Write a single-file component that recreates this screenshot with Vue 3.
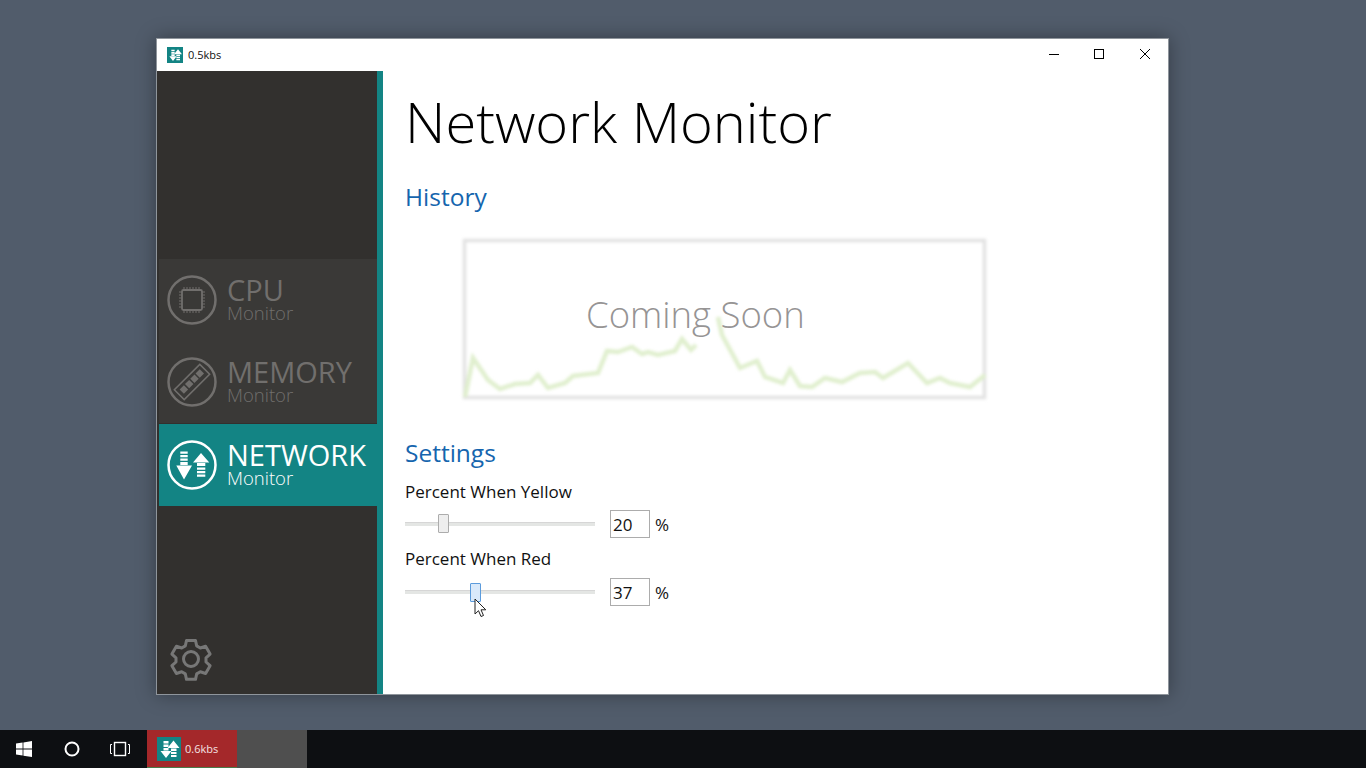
<script setup>
const navItems = [
  { id: 'cpu', title: 'CPU', active: false },
  { id: 'memory', title: 'MEMORY', active: false },
  { id: 'network', title: 'NETWORK', active: true }
]
const sliders = [
  { label: 'Percent When Yellow', value: 20, thumb: 33, hot: false },
  { label: 'Percent When Red', value: 37, thumb: 65, hot: true }
]
const line1 = '465,397 473,358 488,380 500,389 515,384 530,383 538,375 548,388 565,383 573,376 598,373 607,351 618,352 632,347 642,354 648,352 658,355 675,351 682,339 691,350 696,345'
const line2 = '718,317 722,335 740,368 757,361 765,377 783,383 790,370 800,386 812,387 825,378 842,382 860,373 875,372 883,378 908,363 927,383 940,378 950,383 970,387 985,375'
</script>

<template>
  <div class="desktop">
    <div class="workspace">
      <div class="window">
        <header class="titlebar">
          <span class="app-icon">
            <svg viewBox="0 0 24 24" width="16" height="16">
              <path d="M6.500 4h5v2.500h-5zM6.500 7.500h5V10h-5zM6.500 11h5v2.500h-5zM3.500 14h11L9 21z" fill="#fff" />
              <path d="M16.500 3.500l6 7.500h-12zM14 11.500h5.500V14H14zM14 15h5.500v2H14zM14 18h5.500v2H14z" fill="#fff" />
            </svg>
          </span>
          <span class="app-title">0.5kbs</span>
          <div class="controls">
            <svg width="46" height="32" viewBox="0 0 46 32"><path d="M19 15.500h10" stroke="#000" fill="none" /></svg>
            <svg width="46" height="32" viewBox="0 0 46 32"><rect x="18.500" y="10.500" width="9" height="9" stroke="#000" fill="none" /></svg>
            <svg width="46" height="32" viewBox="0 0 46 32"><path d="M18 10l10 10M28 10l-10 10" stroke="#000" fill="none" /></svg>
          </div>
        </header>
        <div class="body">
          <aside class="sidebar">
            <nav class="nav">
              <div v-for="item in navItems" :key="item.id" class="nav-item" :class="{ active: item.active }">
                <svg class="nav-icon" viewBox="0 0 50 50" width="50" height="50">
                  <circle cx="25" cy="25" r="23.500" fill="none" stroke="currentColor" stroke-width="2.500" />
                  <g v-if="item.id === 'cpu'" fill="none" stroke="currentColor">
                    <rect x="15" y="15" width="20" height="20" rx="1.500" stroke-width="1.800" />
                    <path d="M17 12v3M20 12v3M23 12v3M26 12v3M29 12v3M32 12v3M17 35v3M20 35v3M23 35v3M26 35v3M29 35v3M32 35v3M12 17h3M12 20h3M12 23h3M12 26h3M12 29h3M12 32h3M35 17h3M35 20h3M35 23h3M35 26h3M35 29h3M35 32h3" stroke-width="1" />
                  </g>
                  <g v-else-if="item.id === 'memory'" transform="rotate(-45 25 25)">
                    <rect x="7" y="18" width="36" height="14" fill="none" stroke="currentColor" stroke-width="1.500" />
                    <rect x="11" y="21.500" width="6" height="6" fill="currentColor" />
                    <rect x="18.500" y="21.500" width="6" height="6" fill="currentColor" />
                    <rect x="26" y="21.500" width="6" height="6" fill="currentColor" />
                    <rect x="33.500" y="21.500" width="6" height="6" fill="currentColor" />
                  </g>
                  <g v-else fill="currentColor">
                    <path d="M13.300 11.500h7.400v2.200h-7.400zM13.300 15h7.400v2.200h-7.400zM13.300 18.500h7.400v2.200h-7.400zM13.300 22h7.400v3h-7.400zM9.300 25.500H25L17 39.500z" />
                    <path d="M34 13l8.300 9.500H26zM30 23h8.300v3h-8.300zM30 27.500h8.300v2.200h-8.300zM30 31h8.300v2.200h-8.300zM30 34.500h8.300v2.200h-8.300z" />
                  </g>
                </svg>
                <div class="nav-text">
                  <div class="nav-title">{{ item.title }}</div>
                  <div class="nav-sub">Monitor</div>
                </div>
              </div>
            </nav>
            <svg class="gear" viewBox="0 0 44 44" width="44" height="44">
              <path d="M17.500 3.500h9l1.200 5.400 3.600 2.100 5.300-1.700 4.500 7.800-4.100 3.700v4.200l4.100 3.700-4.500 7.800-5.300-1.700-3.600 2.100-1.200 5.400h-9l-1.200-5.400-3.600-2.100-5.300 1.700-4.500-7.800 4.100-3.700v-4.200l-4.100-3.700 4.500-7.800 5.300 1.700 3.600-2.100z" fill="none" stroke="#777" stroke-width="3" stroke-linejoin="round" />
              <circle cx="22" cy="22" r="7.500" fill="none" stroke="#777" stroke-width="3" />
            </svg>
          </aside>
          <main class="content">
            <h1 class="page-title">Network Monitor</h1>
            <h2 class="section">History</h2>
            <div class="chart">
              <svg class="chart-svg" viewBox="455 230 540 180" width="540" height="180">
                <rect x="464.500" y="240.500" width="520" height="157" fill="none" stroke="#e2e2e2" stroke-width="3.500" />
                <polyline :points="line1" fill="none" stroke="#e0efce" stroke-width="4.500" />
                <polyline :points="line2" fill="none" stroke="#e0efce" stroke-width="4.500" />
              </svg>
              <div class="soon">Coming Soon</div>
            </div>
            <h2 class="section settings">Settings</h2>
            <div v-for="s in sliders" :key="s.label" class="setting">
              <div class="setting-label">{{ s.label }}</div>
              <div class="setting-row">
                <div class="slider">
                  <div class="track"></div>
                  <div class="thumb" :class="{ hot: s.hot }" :style="{ left: s.thumb + 'px' }"></div>
                </div>
                <div class="value">{{ s.value }}</div>
                <span class="unit">%</span>
              </div>
            </div>
            <svg class="cursor" width="14" height="20" viewBox="0 0 14 20">
              <path d="M1 1v15l3.500-3.300 2.500 5.800 2.500-1-2.500-5.700h4.800z" fill="#fff" stroke="#222" stroke-width="1" />
            </svg>
          </main>
        </div>
      </div>
    </div>
    <footer class="taskbar">
      <div class="tb-btn">
        <svg width="16" height="16" viewBox="0 0 16 16" fill="#fff">
          <path d="M0 2.400l6.600-.9v6.100H0zM7.400 1.400L16 0v7.600H7.400zM0 8.400h6.600v6.100L0 13.600zM7.400 8.400H16V16l-8.600-1.300z" />
        </svg>
      </div>
      <div class="tb-btn">
        <svg width="16" height="16" viewBox="0 0 16 16"><circle cx="8" cy="8" r="6.500" fill="none" stroke="#fff" stroke-width="2" /></svg>
      </div>
      <div class="tb-btn">
        <svg width="22" height="16" viewBox="0 0 22 16" fill="none" stroke="#fff">
          <rect x="5.500" y="1.500" width="11" height="13" stroke-width="1.400" />
          <path d="M3 3.500H1.500v9H3M19 3.500h1.500v9H19" />
        </svg>
      </div>
      <div class="tb-app">
        <span class="tb-tile">
          <svg viewBox="0 0 24 24" width="24" height="24">
            <path d="M6.500 4h5v2.500h-5zM6.500 7.500h5V10h-5zM6.500 11h5v2.500h-5zM3.500 14h11L9 21z" fill="#fff" />
            <path d="M16.500 3.500l6 7.500h-12zM14 11.500h5.500V14H14zM14 15h5.500v2H14zM14 18h5.500v2H14z" fill="#fff" />
          </svg>
        </span>
        <span class="tb-label">0.6kbs</span>
      </div>
      <div class="tb-empty"></div>
    </footer>
  </div>
</template>

<style>
html, body { margin: 0; padding: 0; overflow: hidden; }
</style>

<style scoped>
.desktop {
  width: 1366px;
  height: 768px;
  display: flex;
  flex-direction: column;
  background: #515c6b;
  font-family: "Open Sans", "Noto Sans", sans-serif;
}
.workspace { position: relative; flex: 1; }
.window {
  position: absolute;
  left: 156px;
  top: 38px;
  width: 1013px;
  height: 657px;
  box-sizing: border-box;
  display: flex;
  flex-direction: column;
  background: #fff;
  border: 1px solid #8f959c;
  box-shadow: 0 0 18px rgba(0, 0, 0, .35);
}
.titlebar {
  height: 32px;
  display: flex;
  align-items: center;
  padding-left: 10px;
  flex: none;
}
.app-icon {
  width: 16px;
  height: 16px;
  background: #138484;
  display: flex;
}
.app-title { margin-left: 5px; font-size: 11px; line-height: 14px; margin-top: -1px; color: #111; }
.controls { margin-left: auto; display: flex; }
.controls svg { display: block; }
.body { flex: 1; display: flex; min-height: 0; }
.sidebar {
  flex: none;
  box-sizing: border-box;
  background: #32302e;
  border-right: 6px solid #138484;
  width: 226px;
  display: flex;
  flex-direction: column;
  padding-top: 188px;
}
.nav { margin-left: 2px; }
.nav-item {
  height: 82px;
  box-sizing: border-box;
  background: #3a3937;
  color: #716f6d;
  display: flex;
  align-items: center;
  padding-left: 8px;
  gap: 10px;
}
.nav-item.active { background: #138484; color: #fff; margin-top: 1px; }
.nav-icon { flex: none; }
.nav-text { display: flex; flex-direction: column; margin-top: -8px; }
.nav-title { font-size: 29px; line-height: 33px; font-weight: 400; }
.nav-sub { font-size: 18.500px; line-height: 14px; font-weight: 300; }
.gear { margin: auto 0 13px 12px; }
.content {
  position: relative;
  flex: 1;
  padding-left: 22px;
  color: #111;
}
.page-title {
  margin: 16px 0 0;
  font-size: 56px;
  line-height: 68px;
  font-weight: 300;
  color: #000;
}
.section {
  margin: 25px 0 0;
  font-size: 24.500px;
  line-height: 34px;
  font-weight: 400;
  color: #1565ae;
}
.section.settings { margin-top: 26px; }
.chart { position: relative; margin: 16px 0 0 50px; width: 540px; height: 180px; }
.chart-svg { display: block; filter: blur(1.6px); }
.soon {
  position: absolute;
  left: 131px;
  top: 58px;
  font-size: 36.500px;
  line-height: 52px;
  font-weight: 300;
  color: #969494;
}
.setting { margin-top: 9px; }
.section.settings + .setting { margin-top: 10px; }
.setting-label { font-size: 17px; line-height: 24px; color: #111; }
.setting-row { display: flex; align-items: center; margin-top: 6px; height: 28px; }
.setting:last-of-type .setting-row { margin-top: 7px; }
.slider { position: relative; width: 190px; height: 28px; }
.track {
  position: absolute;
  left: 0; right: 0; top: 12px;
  height: 4px;
  background: #e4e6e4;
  border-top: 1px solid #d6d6d6;
  box-sizing: border-box;
}
.thumb {
  position: absolute;
  top: 4px;
  width: 11px;
  height: 19px;
  box-sizing: border-box;
  background: #eeeeee;
  border: 1px solid #acacac;
  border-radius: 1px;
}
.thumb.hot { background: #d9e9fa; border-color: #5b9bdc; top: 5px; }
.value {
  margin-left: 15px;
  width: 40px;
  height: 28px;
  box-sizing: border-box;
  border: 1px solid #acacac;
  padding-left: 2px;
  font-size: 17px;
  line-height: 27px;
}
.unit { margin-left: 5px; font-size: 17px; }
.cursor { position: absolute; left: 91px; top: 527px; }
.taskbar {
  height: 38px;
  flex: none;
  background: #0d0f12;
  display: flex;
  align-items: stretch;
}
.tb-btn { width: 48px; display: flex; align-items: center; justify-content: center; }
.tb-btn svg { display: block; }
.tb-btn:nth-child(3) { margin-right: 3px; }
.tb-app {
  width: 90px;
  background: #a4282a;
  display: flex;
  align-items: center;
  padding-left: 10px;
  box-sizing: border-box;
  border-bottom: 1px solid #4a7a4a;
}
.tb-tile { width: 24px; height: 24px; background: #138484; display: flex; }
.tb-label { margin-left: 4px; font-size: 11px; color: #f3e3e3; }
.tb-empty { width: 70px; background: #4f4f4f; }
</style>
